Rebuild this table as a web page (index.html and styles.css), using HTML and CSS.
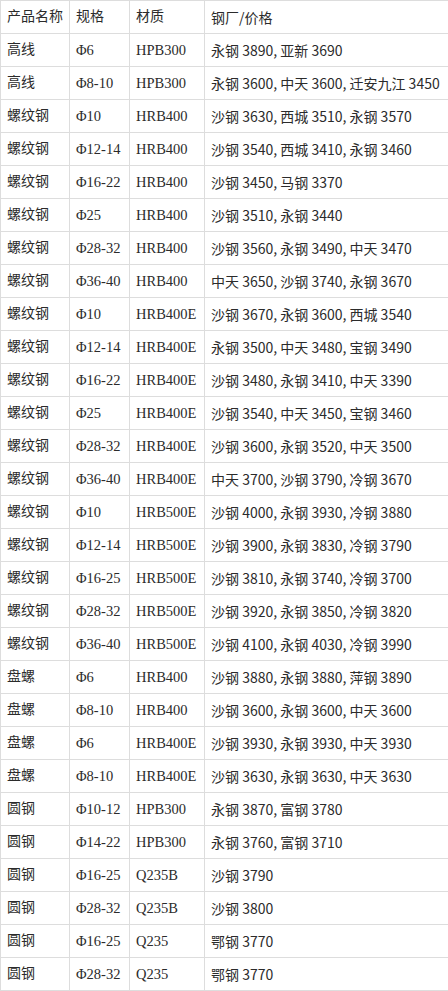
FILE: index.html
```html
<!DOCTYPE html>
<html lang="zh-CN">
<head>
<meta charset="utf-8">
<title>钢材价格</title>
<link rel="stylesheet" href="styles.css">
</head>
<body>
<table class="price-table">
  <colgroup>
    <col class="c-name">
    <col class="c-spec">
    <col class="c-mat">
    <col class="c-price">
  </colgroup>
  <thead>
    <tr><th>产品名称</th><th>规格</th><th>材质</th><th class="price">钢厂/价格</th></tr>
  </thead>
  <tbody>
    <tr><td>高线</td><td class="latin">Φ6</td><td class="latin">HPB300</td><td class="price">永钢 3890, 亚新 3690</td></tr>
    <tr><td>高线</td><td class="latin">Φ8-10</td><td class="latin">HPB300</td><td class="price">永钢 3600, 中天 3600, 迁安九江 3450</td></tr>
    <tr><td>螺纹钢</td><td class="latin">Φ10</td><td class="latin">HRB400</td><td class="price">沙钢 3630, 西城 3510, 永钢 3570</td></tr>
    <tr><td>螺纹钢</td><td class="latin">Φ12-14</td><td class="latin">HRB400</td><td class="price">沙钢 3540, 西城 3410, 永钢 3460</td></tr>
    <tr><td>螺纹钢</td><td class="latin">Φ16-22</td><td class="latin">HRB400</td><td class="price">沙钢 3450, 马钢 3370</td></tr>
    <tr><td>螺纹钢</td><td class="latin">Φ25</td><td class="latin">HRB400</td><td class="price">沙钢 3510, 永钢 3440</td></tr>
    <tr><td>螺纹钢</td><td class="latin">Φ28-32</td><td class="latin">HRB400</td><td class="price">沙钢 3560, 永钢 3490, 中天 3470</td></tr>
    <tr><td>螺纹钢</td><td class="latin">Φ36-40</td><td class="latin">HRB400</td><td class="price">中天 3650, 沙钢 3740, 永钢 3670</td></tr>
    <tr><td>螺纹钢</td><td class="latin">Φ10</td><td class="latin">HRB400E</td><td class="price">沙钢 3670, 永钢 3600, 西城 3540</td></tr>
    <tr><td>螺纹钢</td><td class="latin">Φ12-14</td><td class="latin">HRB400E</td><td class="price">永钢 3500, 中天 3480, 宝钢 3490</td></tr>
    <tr><td>螺纹钢</td><td class="latin">Φ16-22</td><td class="latin">HRB400E</td><td class="price">沙钢 3480, 永钢 3410, 中天 3390</td></tr>
    <tr><td>螺纹钢</td><td class="latin">Φ25</td><td class="latin">HRB400E</td><td class="price">沙钢 3540, 中天 3450, 宝钢 3460</td></tr>
    <tr><td>螺纹钢</td><td class="latin">Φ28-32</td><td class="latin">HRB400E</td><td class="price">沙钢 3600, 永钢 3520, 中天 3500</td></tr>
    <tr><td>螺纹钢</td><td class="latin">Φ36-40</td><td class="latin">HRB400E</td><td class="price">中天 3700, 沙钢 3790, 冷钢 3670</td></tr>
    <tr><td>螺纹钢</td><td class="latin">Φ10</td><td class="latin">HRB500E</td><td class="price">沙钢 4000, 永钢 3930, 冷钢 3880</td></tr>
    <tr><td>螺纹钢</td><td class="latin">Φ12-14</td><td class="latin">HRB500E</td><td class="price">沙钢 3900, 永钢 3830, 冷钢 3790</td></tr>
    <tr><td>螺纹钢</td><td class="latin">Φ16-25</td><td class="latin">HRB500E</td><td class="price">沙钢 3810, 永钢 3740, 冷钢 3700</td></tr>
    <tr><td>螺纹钢</td><td class="latin">Φ28-32</td><td class="latin">HRB500E</td><td class="price">沙钢 3920, 永钢 3850, 冷钢 3820</td></tr>
    <tr><td>螺纹钢</td><td class="latin">Φ36-40</td><td class="latin">HRB500E</td><td class="price">沙钢 4100, 永钢 4030, 冷钢 3990</td></tr>
    <tr><td>盘螺</td><td class="latin">Φ6</td><td class="latin">HRB400</td><td class="price">沙钢 3880, 永钢 3880, 萍钢 3890</td></tr>
    <tr><td>盘螺</td><td class="latin">Φ8-10</td><td class="latin">HRB400</td><td class="price">沙钢 3600, 永钢 3600, 中天 3600</td></tr>
    <tr><td>盘螺</td><td class="latin">Φ6</td><td class="latin">HRB400E</td><td class="price">沙钢 3930, 永钢 3930, 中天 3930</td></tr>
    <tr><td>盘螺</td><td class="latin">Φ8-10</td><td class="latin">HRB400E</td><td class="price">沙钢 3630, 永钢 3630, 中天 3630</td></tr>
    <tr><td>圆钢</td><td class="latin">Φ10-12</td><td class="latin">HPB300</td><td class="price">永钢 3870, 富钢 3780</td></tr>
    <tr><td>圆钢</td><td class="latin">Φ14-22</td><td class="latin">HPB300</td><td class="price">永钢 3760, 富钢 3710</td></tr>
    <tr><td>圆钢</td><td class="latin">Φ16-25</td><td class="latin">Q235B</td><td class="price">沙钢 3790</td></tr>
    <tr><td>圆钢</td><td class="latin">Φ28-32</td><td class="latin">Q235B</td><td class="price">沙钢 3800</td></tr>
    <tr><td>圆钢</td><td class="latin">Φ16-25</td><td class="latin">Q235</td><td class="price">鄂钢 3770</td></tr>
    <tr><td>圆钢</td><td class="latin">Φ28-32</td><td class="latin">Q235</td><td class="price">鄂钢 3770</td></tr>
  </tbody>
</table>
</body>
</html>
```

FILE: styles.css
```css
html, body {
  margin: 0;
  padding: 0;
  background: #ffffff;
}

.price-table {
  border-collapse: collapse;
  table-layout: fixed;
  width: 448px;
  font-family: "Liberation Serif", "Noto Sans CJK SC", serif;
  font-size: 14px;
  line-height: 20px;
  color: #2b2b2b;
}

.c-name { width: 69px; }
.c-spec { width: 60px; }
.c-mat { width: 75px; }
.c-price { width: 244px; }

.price-table th,
.price-table td {
  border: 1px solid #dddddd;
  padding: 6px 6px;
  text-align: left;
  font-weight: normal;
  white-space: nowrap;
  vertical-align: middle;
}

.price-table .latin {
  font-size: 14.5px;
}

.price-table .price {
  font-family: "Noto Sans CJK SC", sans-serif;
}
```
